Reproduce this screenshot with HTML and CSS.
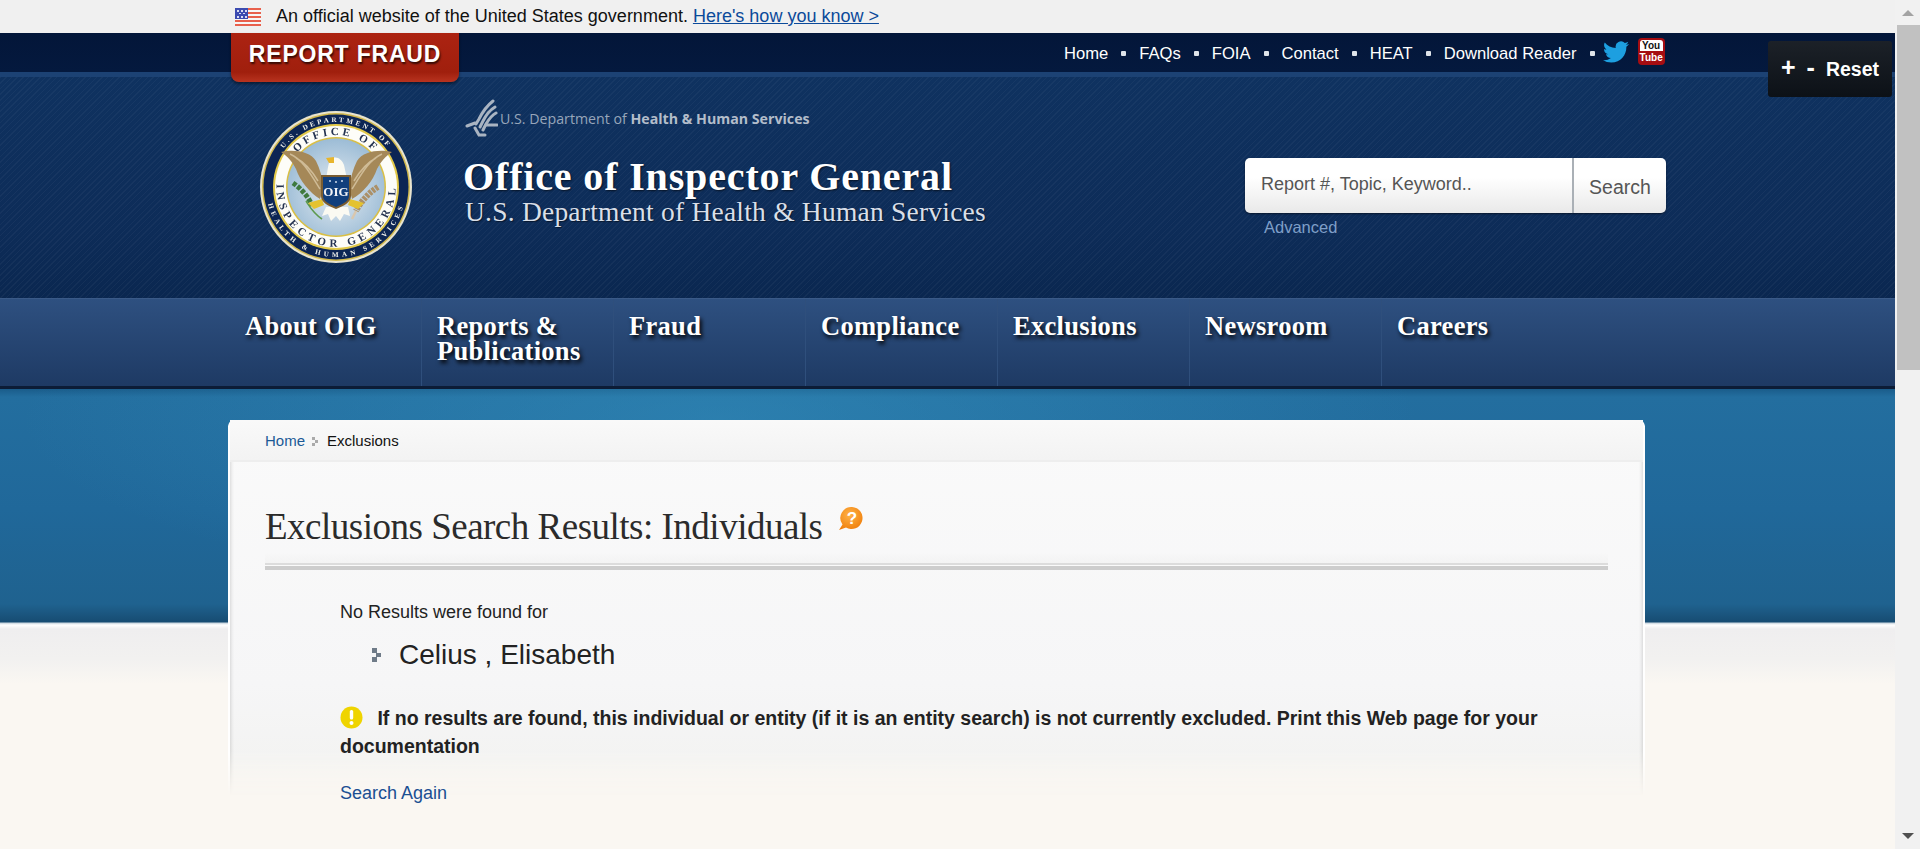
FILE: index.html
```html
<!DOCTYPE html>
<html>

<head>
  <meta charset="utf-8">
  <meta name="viewport" content="width=device-width, initial-scale=1.0">
  <title>Exclusions Search Results: Individuals</title>
  <link rel="stylesheet" href="styles.css">
</head>

<body>
  <div class="page">
    <!-- Government banner -->
    <div class="gov-banner">
      <svg class="flag" width="26" height="18" viewBox="0 0 26 18">
        <rect width="26" height="18" fill="#f6f6f6"/>
        <rect y="0" width="26" height="2" fill="#e8604c"/>
        <rect y="4" width="26" height="2" fill="#e8604c"/>
        <rect y="8" width="26" height="2" fill="#e8604c"/>
        <rect y="12" width="26" height="2" fill="#e8604c"/>
        <rect y="16" width="26" height="2" fill="#e8604c"/>
        <rect width="13" height="11" fill="#3c4bb0"/>
        <g fill="#d8dcf2">
          <rect x="2" y="2" width="2" height="2"/><rect x="6" y="2" width="2" height="2"/><rect x="10" y="2" width="2" height="2"/>
          <rect x="4" y="5" width="2" height="1"/><rect x="8" y="5" width="2" height="1"/>
          <rect x="2" y="8" width="2" height="2"/><rect x="6" y="8" width="2" height="2"/><rect x="10" y="8" width="2" height="2"/>
        </g>
      </svg>
      <span>An official website of the United States government.</span>
      <a href="#">Here's how you know &gt;</a>
    </div>

    <!-- Top links -->
    <div class="topbar">
      <a class="report-fraud" href="#">REPORT FRAUD</a>
      <ul class="top-links">
        <li><a href="#">Home</a></li>
        <li><a href="#">FAQs</a></li>
        <li><a href="#">FOIA</a></li>
        <li><a href="#">Contact</a></li>
        <li><a href="#">HEAT</a></li>
        <li><a href="#">Download Reader</a></li>
      </ul>
      <svg class="twitter" width="26" height="22" viewBox="0 2 24 20">
        <path fill="#1d9fe0" d="M23.953 4.57a10 10 0 01-2.825.775 4.958 4.958 0 002.163-2.723c-.951.555-2.005.959-3.127 1.184a4.92 4.92 0 00-8.384 4.482C7.69 8.095 4.067 6.13 1.64 3.162a4.822 4.822 0 00-.666 2.475c0 1.71.87 3.213 2.188 4.096a4.904 4.904 0 01-2.228-.616v.06a4.923 4.923 0 003.946 4.827 4.996 4.996 0 01-2.212.085 4.936 4.936 0 004.604 3.417 9.867 9.867 0 01-6.102 2.105c-.39 0-.779-.023-1.17-.067a13.995 13.995 0 007.557 2.209c9.053 0 13.998-7.496 13.998-13.985 0-.21 0-.42-.015-.63A9.935 9.935 0 0024 4.59z"/>
      </svg>
      <div class="youtube"><span class="yt-you">You</span><span class="yt-tube">Tube</span></div>
    </div>

    <!-- Text size widget -->
    <div class="text-size"><span class="size-btn">+</span><span class="size-btn">-</span><span>Reset</span></div>

    <!-- Header -->
    <div class="header">
      <svg class="seal" width="152" height="152" viewBox="0 0 152 152">
        <defs>
          <radialGradient id="sky" cx="50%" cy="55%" r="55%">
            <stop offset="0" stop-color="#e6edf2"/>
            <stop offset="1" stop-color="#9cbcd6"/>
          </radialGradient>
          <path id="ringTop" d="M76 76 m-65 0 a65 65 0 0 1 130 0"/>
          <path id="ringBottom" d="M76 76 m-70 0 a70 70 0 0 0 140 0"/>
          <path id="midTop" d="M76 76 m-52 0 a52 52 0 0 1 104 0"/>
          <path id="midBottom" d="M17.400 66 A59.500 59.500 0 1 0 134.600 66"/>
        </defs>
        <circle cx="76" cy="76" r="76" fill="#e8e4cf"/>
        <circle cx="76" cy="76" r="74" fill="#d2b94e"/>
        <circle cx="76" cy="76" r="72.500" fill="#0c2554"/>
        <circle cx="76" cy="76" r="63" fill="#e2c94a"/>
        <circle cx="76" cy="76" r="61" fill="#fdfdf8"/>
        <circle cx="76" cy="76" r="50" fill="#d9bf45"/>
        <circle cx="76" cy="76" r="48.500" fill="url(#sky)"/>
        <text class="seal-top"><textPath href="#ringTop" startOffset="50%" text-anchor="middle">U.S. DEPARTMENT OF</textPath></text>
        <text class="seal-foot"><textPath href="#ringBottom" startOffset="50%" text-anchor="middle">HEALTH &amp; HUMAN SERVICES</textPath></text>
        <text class="seal-mid"><textPath href="#midTop" startOffset="50%" text-anchor="middle">OFFICE OF</textPath></text>
        <text class="seal-mid seal-name"><textPath href="#midBottom" startOffset="50%" text-anchor="middle">INSPECTOR GENERAL</textPath></text>
        <!-- wings -->
        <path fill="#a58858" d="M21 41 C33 38 50 40 56 50 C60 58 62 66 64 76 L60 88 C50 82 40 70 36 58 C32 50 27 45 21 41Z"/>
        <path fill="#a58858" d="M132 41 C120 38 103 40 97 50 C93 58 91 66 89 76 L92 88 C103 82 113 70 117 58 C121 50 126 45 132 41Z"/>
        <path fill="none" stroke="#cfbb96" stroke-width="1.500" d="M30 43 C42 48 50 62 60 78 M122 43 C110 48 102 62 92 78 M36 47 C46 52 52 60 58 70 M116 47 C106 52 100 60 94 70"/>
        <!-- tail and head -->
        <path fill="#fbfaf2" d="M66 96 L88 96 L90 105 L84 103 L80 110 L76 105 L71 110 L68 103 L62 105Z"/>
        <path fill="#fbfaf2" d="M66 68 C68 58 68 52 71 48 C76 44 82 48 84 54 L87 68Z"/>
        <path fill="#e8b52c" d="M66 47 L74 46 L74 52 L69 52Z"/>
        <!-- olive and arrows -->
        <path fill="none" stroke="#3f7a3e" stroke-width="5" stroke-dasharray="4 1.500" d="M33 72 C42 78 50 88 52 95"/>
        <path fill="none" stroke="#5d9a4e" stroke-width="1.600" d="M46 90 C50 96 53 102 62 108"/>
        <path fill="none" stroke="#ab9068" stroke-width="6" stroke-dasharray="3 1" d="M118 76 C108 82 100 92 96 100"/>
        <path fill="none" stroke="#d9c7ae" stroke-width="2.500" d="M96 100 L92 108"/>
        <path fill="#e4c22f" d="M48 92 L62 88 L64 94 L54 98Z M104 92 L90 88 L88 94 L98 98Z"/>
        <!-- shield -->
        <path fill="#7a5c30" d="M61 64 L91 64 L91 85 C91 91 84 95 76 98 C68 95 61 91 61 85Z"/>
        <path fill="#113f7c" d="M63 66 L89 66 L89 85 C89 90 83 93 76 96 C69 93 63 90 63 85Z"/>
        <g fill="#cfdcec">
          <circle cx="70" cy="70" r="1"/><circle cx="76" cy="71" r="1"/><circle cx="82" cy="70" r="1"/>
        </g>
        <text class="seal-oig" x="76" y="85" text-anchor="middle">OIG</text>
      </svg>

      <div class="agency">
        <div class="hhs">
          <svg class="hhs-logo" width="33" height="39" viewBox="0 0 33 39">
            <g fill="none" stroke="#a9b4c2" stroke-width="3" stroke-linecap="round">
              <path d="M28 2 C23 6 18 12 14 20 L11 25"/>
              <path d="M30 8 C25 11 21 16 18 22 L15 28"/>
              <path d="M31 14 C27 16 24 20 21 25 L18 31"/>
              <path d="M2 27 L10 24 M10 29 L14 36 L20 36 M21 26 L32 26"/>
            </g>
          </svg>
          <span>U.S. Department of <b>Health &amp; Human Services</b></span>
        </div>
        <div class="agency-name">Office of Inspector General</div>
        <div class="agency-dept">U.S. Department of Health &amp; Human Services</div>
      </div>

      <div class="search">
        <div class="search-box">
          <div class="search-input">Report #, Topic, Keyword..</div>
          <div class="search-btn">Search</div>
        </div>
        <a class="advanced" href="#">Advanced</a>
      </div>
    </div>

    <!-- Main navigation -->
    <ul class="nav">
      <li>About OIG</li>
      <li>Reports &amp; Publications</li>
      <li>Fraud</li>
      <li>Compliance</li>
      <li>Exclusions</li>
      <li>Newsroom</li>
      <li>Careers</li>
    </ul>

    <!-- Content -->
    <div class="main">
      <div class="card">
        <div class="breadcrumb">
          <a href="#">Home</a>
          <svg class="crumb-arrow" width="7" height="9" viewBox="0 0 7 9"><path fill="#aaa" d="M0 0h3v3H0zM3 3h3v3H3zM0 6h3v3H0z"/></svg>
          <span>Exclusions</span>
        </div>

        <div class="title-row">
          <h1>Exclusions Search Results: Individuals</h1>
          <svg class="help" width="26" height="28" viewBox="0 0 26 28">
            <defs>
              <radialGradient id="orange" cx="45%" cy="35%" r="70%">
                <stop offset="0" stop-color="#ffb347"/>
                <stop offset="1" stop-color="#ef7d0a"/>
              </radialGradient>
            </defs>
            <path fill="url(#orange)" d="M14 2 a11 11 0 1 1 -6 20.500 L1 25 L4.500 19.500 A11 11 0 0 1 14 2Z"/>
            <text class="help-mark" x="14" y="19" text-anchor="middle">?</text>
          </svg>
        </div>
        <div class="title-rule"></div>

        <div class="results">
          <p class="no-results">No Results were found for</p>
          <div class="searched">
            <svg class="name-bullet" width="9" height="14" viewBox="0 0 9 14"><path fill="#6f7b88" d="M0 0h5v5H0zM4 5h5v4H4zM0 9h5v5H0z"/></svg>
            <span>Celius , Elisabeth</span>
          </div>
          <p class="notice">
            <svg class="warn" width="23" height="23" viewBox="0 0 23 23">
              <circle cx="11.500" cy="11.500" r="11" fill="#efd400"/>
              <rect x="9.800" y="4" width="3.400" height="9.500" rx="1.500" fill="#fff"/>
              <circle cx="11.500" cy="17" r="2" fill="#fff"/>
            </svg>
            If no results are found, this individual or entity (if it is an entity search) is not currently excluded. Print this Web page for your documentation
          </p>
          <a class="search-again" href="#">Search Again</a>
        </div>
      </div>
    </div>
  </div>

  <!-- Scrollbar -->
  <div class="scrollbar">
    <div class="arrow-up"></div>
    <div class="thumb"></div>
    <div class="arrow-down"></div>
  </div>
</body>
</html>
```

FILE: styles.css
```css
/* Page frame */
body {
  font-family: "Liberation Sans", Arial, sans-serif;
  margin: 0;
  display: flex;
  height: 849px;
  overflow: hidden;
  background-color: #faf7f2;
  color: #222;
}

.page {
  position: relative;
  flex: 1;
  min-width: 0;
  display: flex;
  flex-direction: column;
}

ul {
  list-style: none;
  margin: 0;
  padding: 0;
}

/* Government banner */
.gov-banner {
  height: 33px;
  flex: none;
  display: flex;
  align-items: center;
  padding-left: 235px;
  background-color: #f0f0f0;
  font-size: 18px;
  color: #111;
}

.flag {
  margin-right: 15px;
}

.gov-banner a {
  margin-left: 5px;
  color: #0b4a9a;
}

/* Top links */
.topbar {
  position: relative;
  flex: none;
  height: 39px;
  display: flex;
  align-items: flex-start;
  padding-left: 1064px;
  background: linear-gradient(#031639, #04193e);
}

.report-fraud {
  position: absolute;
  left: 231px;
  top: 0;
  z-index: 2;
  width: 228px;
  height: 49px;
  box-sizing: border-box;
  padding-top: 8px;
  text-align: center;
  border-radius: 0 0 8px 8px;
  background: linear-gradient(#ac2312, #a01f0d 80%, #b8331f);
  box-shadow: 0 2px 3px rgba(0, 0, 0, 0.45);
  color: #fff;
  font-size: 23px;
  font-weight: bold;
  letter-spacing: 0.8px;
  text-decoration: none;
  text-shadow: 1px 2px 2px rgba(0, 0, 0, 0.7);
}

.top-links {
  display: flex;
  margin-top: 11px;
  font-size: 16.6px;
  line-height: 20px;
}

.top-links a {
  color: #fff;
  text-decoration: none;
}

.top-links li::after {
  content: "";
  display: inline-block;
  width: 5px;
  height: 5px;
  margin: 0 13px 3px 13px;
  border-radius: 1px;
  background-color: #dfe4ea;
}

.twitter {
  margin: 8px 0 0 -5px;
}

.youtube {
  width: 27px;
  height: 27px;
  margin: 5px 0 0 9px;
  box-sizing: border-box;
  padding: 2px;
  border-radius: 4px;
  background-color: #a50d12;
  font-size: 10px;
  font-weight: bold;
  line-height: 11px;
  text-align: center;
}

.yt-you {
  display: block;
  height: 11px;
  background-color: #fff;
  border-radius: 3px 3px 0 0;
  color: #111;
}

.yt-tube {
  display: block;
  color: #fff;
  margin-top: 1px;
}

/* Text size widget, sits over the header */
.text-size {
  position: absolute;
  left: 1768px;
  top: 41px;
  z-index: 3;
  width: 124px;
  height: 56px;
  box-sizing: border-box;
  display: flex;
  align-items: center;
  gap: 11px;
  padding-left: 13px;
  border-radius: 3px;
  background: linear-gradient(#1c2128, #0c1117);
  color: #fff;
  font-size: 19.5px;
  font-weight: bold;
}

.size-btn {
  font-size: 25px;
  line-height: 24px;
  margin-top: -4px;
}

/* Header */
.header {
  flex: none;
  height: 226px;
  box-sizing: border-box;
  display: flex;
  padding-left: 260px;
  border-top: 5px solid #1c4274;
  background-color: #0e2c56;
  background-image:
    repeating-linear-gradient(135deg, rgba(255, 255, 255, 0.035) 0 1px, transparent 1px 4px),
    linear-gradient(#0f3260, #0d2c58 70%, #0a2750);
}

.seal {
  flex: none;
  margin-top: 34px;
  filter: blur(0.3px);
}

.seal-top,
.seal-foot {
  font: bold 7px "Liberation Serif", serif;
  fill: #f4f4ee;
}

.seal-top {
  letter-spacing: 2.6px;
}

.seal-foot {
  letter-spacing: 3.6px;
}

.seal-mid {
  font: bold 11px "Liberation Serif", serif;
  letter-spacing: 3.2px;
  fill: #24324f;
}

.seal-name {
  letter-spacing: 4.2px;
}

.seal-oig {
  font: bold 13px "Liberation Serif", serif;
  fill: #f2f4f8;
}

.agency {
  flex: none;
  width: 782px;
  margin-left: 51px;
  padding-top: 21px;
  box-sizing: border-box;
  color: #fff;
}

.hhs {
  display: flex;
  align-items: center;
  font-family: "Open Sans", sans-serif;
  font-size: 14.2px;
  color: #97a6ba;
  height: 40px;
}

.hhs-logo {
  margin: 0 2px 0 2px;
}

.hhs b {
  color: #b3bdca;
}

.agency-name {
  margin-top: 18px;
  font-family: "Liberation Serif", serif;
  font-size: 40px;
  font-weight: bold;
  line-height: 42px;
  letter-spacing: 0.85px;
  text-shadow: 1px 1px 2px rgba(0, 0, 0, 0.6);
}

.agency-dept {
  margin: -1px 0 0 2px;
  font-family: "Liberation Serif", serif;
  font-size: 27.5px;
  line-height: 30px;
  letter-spacing: 0.22px;
  color: #d9dfe8;
  text-shadow: 1px 1px 1px rgba(0, 0, 0, 0.5);
}

.search {
  flex: none;
  width: 421px;
  margin-top: 81px;
}

.search-box {
  display: flex;
  height: 55px;
  border-radius: 5px;
  overflow: hidden;
  background: linear-gradient(#fff, #fff 35%, #e9e9e9);
  box-shadow: 0 1px 2px rgba(0, 0, 0, 0.5);
}

.search-input {
  flex: 1;
  padding: 16px 0 0 16px;
  font-size: 18px;
  color: #555;
}

.search-btn {
  width: 94px;
  padding-top: 18px;
  box-sizing: border-box;
  border-left: 2px solid #aab0b6;
  text-align: center;
  font-size: 19.5px;
  color: #555;
}

.advanced {
  display: block;
  margin: 5px 0 0 19px;
  font-size: 16.5px;
  color: #7f9fc8;
  text-decoration: none;
}

/* Main navigation */
.nav {
  flex: none;
  height: 91px;
  box-sizing: border-box;
  display: flex;
  padding-left: 229px;
  border-top: 1px solid #3a5a88;
  border-bottom: 3px solid #0c1c36;
  background: linear-gradient(#2e5080, #1e3a64);
}

.nav li {
  width: 192px;
  box-sizing: border-box;
  padding: 15px 10px 0 15px;
  border-left: 1px solid #2f4f7c;
  font-family: "Liberation Serif", serif;
  font-size: 26.5px;
  font-weight: bold;
  line-height: 25px;
  letter-spacing: 0.3px;
  color: #fff;
  text-shadow: 2px 3px 4px #000;
}

.nav li:first-child {
  border-left: 0;
  padding-left: 16px;
}

/* Content */
.main {
  flex: 1;
  min-height: 0;
  background-color: #faf7f2;
  background-image:
    radial-gradient(700px 180px at 720px 30px, rgba(60, 160, 205, 0.35), transparent),
    linear-gradient(#1a5c8a, #236e9f 8px, #20689a 120px, #1f628f 215px, #174c72 233px, #c8d4de 234px, #fff 236px, #efeeef 240px, #f2f1f0 270px, #faf7f2 295px);
  background-size: 100% 234px, 100% 100%;
  background-repeat: no-repeat;
}

.card {
  position: relative;
  z-index: 0;
  width: 1417px;
  margin: 31px 0 0 228px;
  box-sizing: border-box;
  padding: 0 37px;
}

/* The frame fades into the page at its foot */
.card::before {
  content: "";
  position: absolute;
  z-index: -1;
  top: 0;
  left: 0;
  right: 0;
  height: 376px;
  box-sizing: border-box;
  border: 2px solid #fff;
  border-bottom: 0;
  border-radius: 6px 6px 0 0;
  background: linear-gradient(#fafafa, #f6f6f7 70%, #f3f3f2 90%, #f9f7f3);
  box-shadow: inset 0 0 4px rgba(0, 0, 0, 0.22);
  -webkit-mask-image: linear-gradient(#000 88%, transparent);
  mask-image: linear-gradient(#000 88%, transparent);
}

.breadcrumb {
  display: flex;
  align-items: center;
  height: 42px;
  margin: 0 -35px;
  padding: 0 0 0 35px;
  box-sizing: border-box;
  border-bottom: 2px solid #eeeeee;
  background: linear-gradient(#f9f9f9, #f3f3f3);
  font-size: 15px;
  color: #111;
}

.breadcrumb a {
  color: #1b5a96;
  text-decoration: none;
}

.crumb-arrow {
  margin: 2px 8px 0 7px;
}

.title-row {
  display: flex;
  align-items: flex-start;
  margin-top: 43px;
  height: 58px;
  background: linear-gradient(transparent 82%, #f3f3f3);
}

h1 {
  margin: 0;
  font-family: "Liberation Serif", serif;
  font-size: 37px;
  font-weight: normal;
  line-height: 44px;
  letter-spacing: -0.5px;
  color: #2b2b2b;
}

.help {
  margin: 0 0 0 15px;
}

.help-mark {
  font: bold 17px "Liberation Sans", sans-serif;
  fill: #fff;
}

.title-rule {
  height: 1px;
  border-top: 2px solid #dcdcdc;
  border-bottom: 4px solid #cdcdcd;
  background-color: #fafafa;
}

.results {
  padding: 32px 0 0 75px;
}

.no-results {
  margin: 0;
  font-size: 18px;
  line-height: 20px;
}

.searched {
  display: flex;
  align-items: center;
  margin-top: 17px;
  padding-left: 32px;
  font-size: 28px;
  line-height: 32px;
}

.name-bullet {
  margin-right: 18px;
}

.notice {
  margin: 33px 0 0;
  font-size: 19.5px;
  font-weight: bold;
  line-height: 28px;
  color: #222;
}

.warn {
  vertical-align: -4px;
  margin-right: 9px;
}

.search-again {
  display: block;
  margin-top: 22px;
  font-size: 18px;
  line-height: 22px;
  color: #1b4f92;
  text-decoration: none;
}

/* Scrollbar */
.scrollbar {
  flex: none;
  width: 25px;
  height: 849px;
  position: relative;
  background-color: #f1f1f1;
}

.thumb {
  position: absolute;
  top: 25px;
  left: 2px;
  right: 0;
  height: 345px;
  background-color: #c1c1c1;
}

.arrow-up {
  position: absolute;
  top: 10px;
  left: 7px;
  border: 6px solid transparent;
  border-top: 0;
  border-bottom: 6px solid #a3a3a3;
}

.arrow-down {
  position: absolute;
  bottom: 10px;
  left: 7px;
  border: 6px solid transparent;
  border-bottom: 0;
  border-top: 6px solid #505050;
}
```
